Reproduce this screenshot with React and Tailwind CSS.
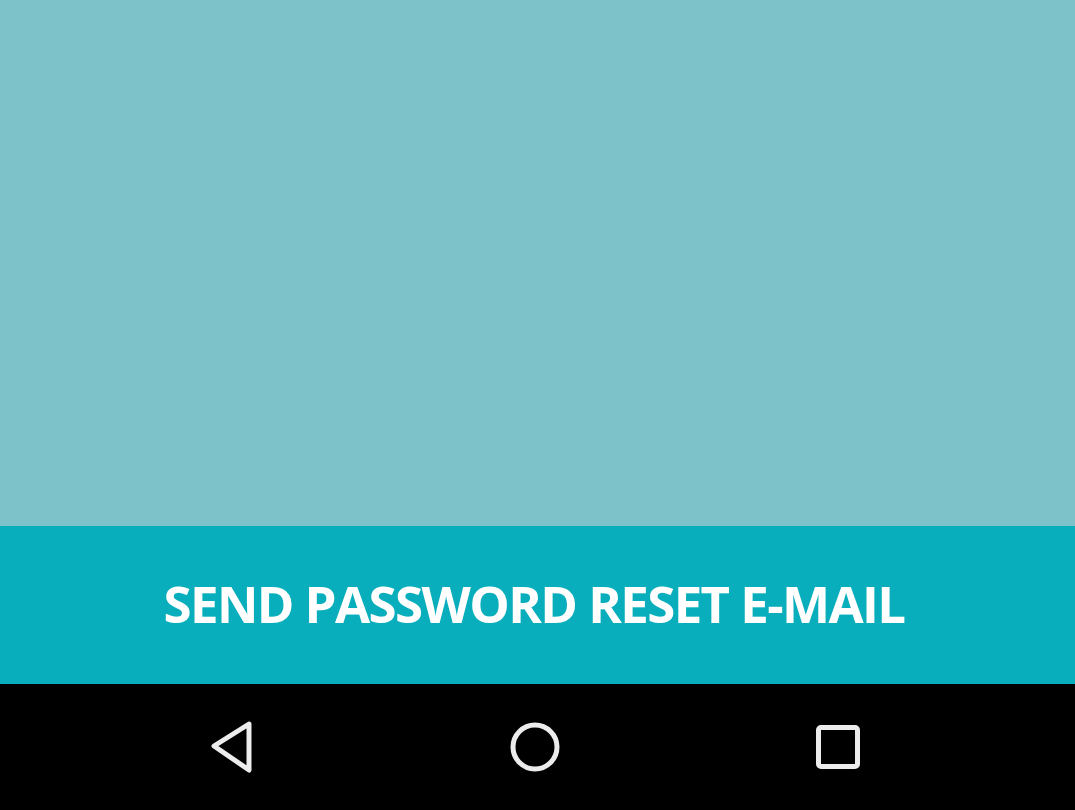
export default function App() {
  return (
    <div className="flex flex-col h-[810px] w-full" style={{ fontFamily: '"Open Sans", "Liberation Sans", sans-serif' }}>
      {/* Empty content area */}
      <div className="h-[526px] bg-[#7cc2c8]" />

      {/* Action button */}
      <button className="h-[158px] w-full bg-[#08aebb] text-white flex items-center justify-center pr-[7px]">
        <span className="text-[51px] font-bold tracking-[-1.6px] leading-none pb-1">SEND PASSWORD RESET E-MAIL</span>
      </button>

      {/* Navigation bar */}
      <div className="flex-1 bg-black flex items-center justify-center gap-[243px] pr-[5px]">
        <div className="w-[60px] flex justify-center">
          <svg width="44" height="54" viewBox="0 0 44 54" fill="none">
            <path d="M39 3 L4 25 L39 49 Z" stroke="#ececec" strokeWidth="5" strokeLinejoin="round" transform="translate(0 1)" />
          </svg>
        </div>
        <div className="w-[60px] flex justify-center">
          <svg width="52" height="52" viewBox="0 0 52 52" fill="none">
            <circle cx="26" cy="26" r="22" stroke="#ececec" strokeWidth="5" />
          </svg>
        </div>
        <div className="w-[60px] flex justify-center">
          <svg width="48" height="48" viewBox="0 0 48 48" fill="none">
            <rect x="4.5" y="4.5" width="39" height="39" rx="2.5" stroke="#ececec" strokeWidth="5" />
          </svg>
        </div>
      </div>
    </div>
  )
}
